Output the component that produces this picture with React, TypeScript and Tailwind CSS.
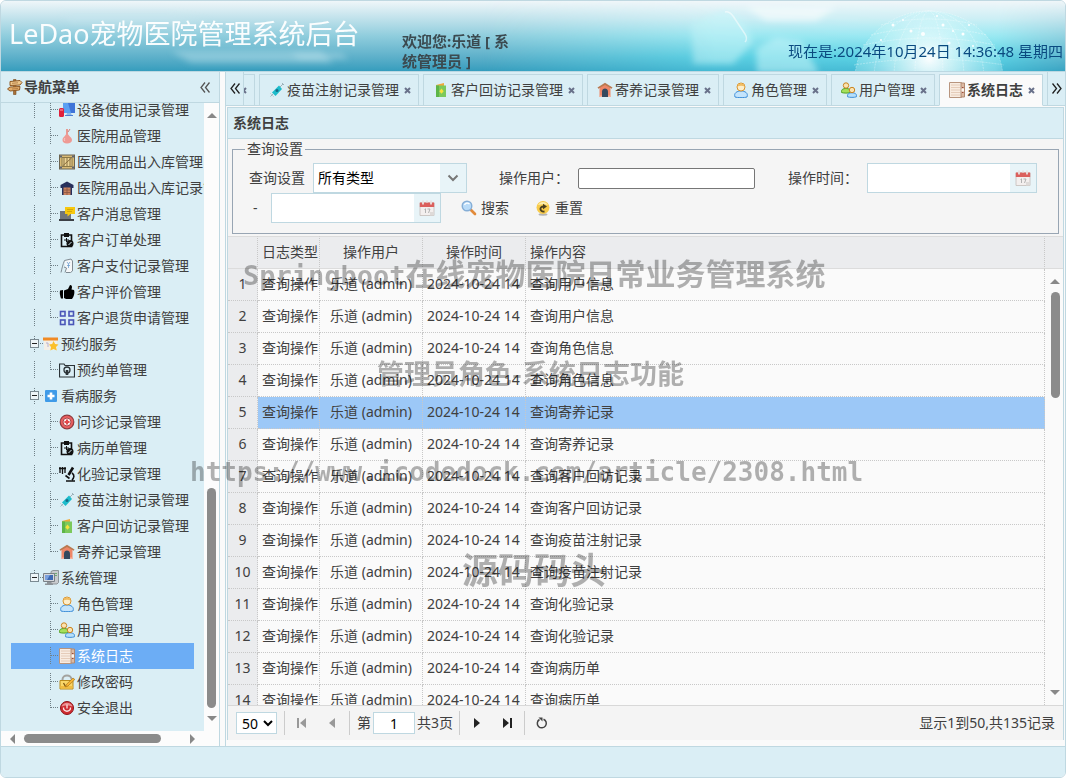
import { useState } from 'react';
import type { ReactNode } from 'react';
import clsx from 'clsx';

type IconName =
  | 'signpost' | 'monitor' | 'flask' | 'crate' | 'warehouse' | 'message' | 'clipboard' | 'payment'
  | 'thumb' | 'squares' | 'calendarStar' | 'folderKey' | 'plusBox' | 'diagnose' | 'microscope'
  | 'syringe' | 'booklet' | 'house' | 'computer' | 'user' | 'users' | 'log' | 'lock' | 'power'
  | 'calendar' | 'search' | 'reset';

const ICONS: Record<IconName, ReactNode> = {
  signpost: (
    <>
      <path d="M6.500 .5h2.500v15H6.500z" fill="#a8713a" stroke="#7b4a1c" strokeWidth=".6" />
      <path d="M3 2.500l10-1 2 2-2 2.500-10 .5z" fill="#f0c88c" stroke="#8f5a26" />
      <path d="M13 7.500l-10 .5-2.500 2 2.500 2 9.500-1z" fill="#e4ae6c" stroke="#8f5a26" />
      <path d="M5 4.300l6-.5M5 10l6-.5" stroke="#a8713a" strokeWidth=".8" />
    </>
  ),
  monitor: (
    <>
      <path d="M4 1h12v10H4z" fill="#5aa0f2" />
      <path d="M9 1h7v10h-4z" fill="#3f74d8" />
      <path d="M8 11h4l1 3H7z" fill="#8fb8e8" />
      <path d="M6 13h8v1H6z" fill="#4c7ed6" />
      <rect x="0" y="6" width="5" height="9" rx="1.500" fill="#e0203c" />
      <path d="M1 8h3" stroke="#f8a0ac" />
    </>
  ),
  flask: (
    <>
      <path d="M8 1v6" stroke="#e79a92" strokeWidth="2" />
      <path d="M8 4c1 4 5 5 5 8 0 2-2 3.500-5 3.500S3.500 14 3.500 12C3.500 9 7 8 8 4z" fill="#ee9a94" />
      <path d="M6 10c-1 1-1 2 0 3" stroke="#f9cfca" fill="none" />
      <path d="M11 1l-2 3" stroke="#cf7f78" />
    </>
  ),
  crate: (
    <>
      <rect x=".5" y="1" width="15" height="14" fill="#d9bb77" stroke="#6c6450" />
      <path d="M3 3.500h10v9H3z" fill="#ecd596" stroke="#8a7848" />
      <path d="M3.500 12L12.500 4M5 4v8M8 4v8M11 4v8" stroke="#8a7040" />
      <path d="M1 1.500h2v2H1zM13 1.500h2v2h-2zM1 12.500h2v2H1zM13 12.500h2v2h-2z" fill="#5f6472" />
    </>
  ),
  warehouse: (
    <>
      <path d="M1.500 5L8 1.500 14.500 5v3H13v7H3V8H1.500z" fill="#27305c" />
      <path d="M4.500 7.500h7V15h-7z" fill="#c98260" />
      <path d="M4.500 10h7M8 7.500V15M4.500 12.500h7" stroke="#8a5440" strokeWidth=".8" />
    </>
  ),
  message: (
    <>
      <path d="M1 5h11v8H1z" fill="#70757c" />
      <path d="M0 13h15v2H0z" fill="#3c4046" />
      <path d="M6 1h10v7h-4.500l-3 2.500V8H6z" fill="#f7c80e" />
      <path d="M8 3.500h6M8 5.500h5" stroke="#c9a008" strokeWidth=".8" />
    </>
  ),
  clipboard: (
    <>
      <path d="M2.500 3h10v11.500h-10z" fill="none" stroke="#111" strokeWidth="1.600" />
      <path d="M5 1h5v4H5z" fill="#111" />
      <path d="M7.500 6v4M5 8h5" stroke="#111" />
      <circle cx="11" cy="11.500" r="3.500" fill="#111" />
      <path d="M9.500 13l3-3" stroke="#daeef5" />
    </>
  ),
  payment: (
    <>
      <path d="M5.500 2.500l6.500-1.500 1.500 2v10l-2 1.500H7" fill="#f4f7f9" stroke="#7f8a92" />
      <path d="M5.500 2.500C4 6 3 10 2 14.500M5 9l2.500 1L6 14.500" stroke="#7f8a92" fill="none" />
      <path d="M8 4l1.500 2L11 4M9.500 6v4M8 7.500h3" stroke="#6f9fd0" fill="none" strokeWidth=".8" />
    </>
  ),
  thumb: (
    <>
      <path d="M1 6.500C.5 9 1 12 2 14.500h2V6z" fill="#000" />
      <path d="M5 6.500L9 5l2-4c2 0 2.500 1.500 1.500 4.500L15 6c1 2 0 7-2 9H7l-2-1z" fill="#000" />
    </>
  ),
  squares: (
    <g fill="none" stroke="#4a56b8" strokeWidth="1.600">
      <rect x="1.500" y="1.500" width="4.500" height="4.500" />
      <rect x="10" y="1.500" width="4.500" height="4.500" />
      <rect x="1.500" y="10" width="4.500" height="4.500" />
      <rect x="10" y="10" width="4.500" height="4.500" />
    </g>
  ),
  calendarStar: (
    <>
      <path d="M1 3h13v11H1z" fill="#f4efe6" />
      <path d="M0 1.500h15v3H0z" fill="#f08a24" />
      <path d="M3 7h2v4" stroke="#b8b2cf" fill="none" />
      <path d="M10.500 5l1.600 3 3.400.6-2.500 2.400.8 3.500-3.300-1.600-3.200 1.600.7-3.500L6 8.600 9.200 8z" fill="#fbc02a" />
    </>
  ),
  folderKey: (
    <>
      <path d="M.5 2v13h15V3.500H6L5 2z" fill="none" stroke="#2b3337" strokeWidth="1.200" />
      <circle cx="8" cy="8" r="3" fill="none" stroke="#2b3337" strokeWidth="1.300" />
      <path d="M8 8v5" stroke="#2b3337" strokeWidth="2.600" />
      <path d="M8 6v2" stroke="#daeef5" strokeWidth="1.600" />
    </>
  ),
  plusBox: (
    <>
      <rect x="2" y="2" width="12" height="12" rx="1" fill="#3f9be8" />
      <path d="M8 4.500v7M4.500 8h7" stroke="#fff" strokeWidth="2.600" />
    </>
  ),
  diagnose: (
    <>
      <circle cx="8" cy="8" r="6.800" fill="#ea5f60" stroke="#8f3a3e" strokeWidth="1.200" />
      <circle cx="8" cy="8" r="4" fill="#fbe9e8" stroke="#a8484c" />
      <path d="M8 5.500v5M5.500 8h5" stroke="#e2474b" strokeWidth="2" />
    </>
  ),
  microscope: (
    <>
      <path d="M1 1v6M3.500 1v7M6 1v6M0 2.500h7" stroke="#111" strokeWidth="1.300" />
      <path d="M14 1.500L9.500 9" stroke="#111" strokeWidth="2.600" />
      <path d="M13 7c3 2 2 5 0 7M6.500 9.500l4 3M7 15h9" stroke="#111" strokeWidth="1.600" fill="none" />
    </>
  ),
  syringe: (
    <>
      <path d="M13 1l2 2M14 2l-3 3M4 12l-2.500 2.500" stroke="#9db3bb" />
      <path d="M10 3.500L13 7l-6.500 7L3 10.500z" fill="#1cbccb" />
      <circle cx="8" cy="8.500" r="1.500" fill="#146c8a" />
      <path d="M1 11l4 4" stroke="#c3d3d8" />
    </>
  ),
  booklet: (
    <>
      <path d="M3 3l8-2v3H3z" fill="#f0a83a" />
      <path d="M3 3.500h10V15H3z" fill="#7cc95c" />
      <path d="M3 3.500h3V15H3z" fill="#5eb548" />
      <path d="M8.500 6.500l2.200 2.700-2.200 2.600-2.200-2.600z" fill="#f8e13c" />
    </>
  ),
  house: (
    <>
      <path d="M2.500 5.500L8 2l5.500 3.500V15h-11z" fill="#ee8768" />
      <path d="M8 .8L.5 5.500l.8 1.300L8 3l6.700 3.800.8-1.300z" fill="#b97a52" />
      <path d="M5 15V9.500c0-4 6-4 6 0V15z" fill="#34495e" />
      <path d="M2.500 13.500H5V15H2.500zM11 13.500h2.500V15H11z" fill="#f7b29c" />
    </>
  ),
  computer: (
    <>
      <path d="M8 1.500L10 .5h5.500v12L14 14H8z" fill="#c8cbce" stroke="#7d8489" strokeWidth=".8" />
      <path d="M11 3.500h3M11 5.500h3" stroke="#6fae72" />
      <path d="M.5 3.500h11v8H.5z" fill="#d5d8dc" stroke="#7a8086" />
      <path d="M2 5h8v5H2z" fill="#3e69b4" />
      <path d="M2 5h5l-3 5H2z" fill="#7ba0dd" />
      <path d="M4 12h4v1.500h2V15H2v-1.500h2z" fill="#8d9398" />
    </>
  ),
  user: (
    <>
      <path d="M2 15c-1.500-4 2-6 6-6s7.500 2 6 6c-2 .8-10 .8-12 0z" fill="#c3e4fc" stroke="#3f8fd8" />
      <circle cx="8" cy="5" r="4" fill="#fdeecb" stroke="#d8942f" />
      <path d="M4.300 4.500c1-4 6.500-4 7.400 0-2-1-5.400-1-7.400 0z" fill="#f1bd62" />
    </>
  ),
  users: (
    <>
      <path d="M.6 10.500C0 7.500 2 6.500 5 6.500s5 1 4.400 4c-2 .8-7 .8-8.800 0z" fill="#a6e05c" stroke="#4f9f22" />
      <circle cx="5" cy="3.500" r="2.700" fill="#fbe3b0" stroke="#c98422" />
      <path d="M6.600 14.800c-.6-3 1.400-4 4.400-4s5 1 4.400 4c-2 .8-7 .8-8.800 0z" fill="#b5dffb" stroke="#3f8fd8" />
      <circle cx="11" cy="8" r="2.700" fill="#fbe3b0" stroke="#c98422" />
    </>
  ),
  log: (
    <>
      <path d="M.5 .5h12v15H.5z" fill="#f8ece1" stroke="#b8957e" />
      <path d="M2 3h9M2 5.500h9M2 8h9M2 10.500h9M2 13h9" stroke="#e2c8b4" strokeWidth=".9" />
      <path d="M12 1h3.500v14H12z" fill="#dcb9a2" stroke="#b08a72" />
      <path d="M12.500 6.500h2.500v3h-2.500z" fill="#fbf3ec" />
      <path d="M13 5.500h1.500M13 10.500h1.500" stroke="#9b4a3a" />
    </>
  ),
  lock: (
    <>
      <path d="M3.500 7V5.500c0-5.500 9-5.500 9 0" fill="none" stroke="#a3a39f" strokeWidth="2" />
      <path d="M1 6.500h13v8.500H1z" fill="#f9d668" stroke="#b98a1c" />
      <path d="M1.500 12h12v2.500h-12z" fill="#f2bd40" />
      <path d="M4.500 9l2 3.500" stroke="#7a5410" strokeWidth="1.300" />
      <path d="M6.500 13l.8-2.500L14 4l1.800 1.500-6.800 6.500z" fill="#f9b532" stroke="#a8741a" strokeWidth=".7" />
    </>
  ),
  power: (
    <>
      <circle cx="8" cy="8" r="6.500" fill="#cf2c31" stroke="#8e1418" />
      <path d="M2.500 6.500c1.500-5 9.500-5 11 0-3-1.500-8-1.500-11 0z" fill="#f4b0b0" opacity=".75" />
      <path d="M4.500 7.500c-.5 5 7.500 5 7 0M8 4.500v4" fill="none" stroke="#fbe3e3" strokeWidth="1.300" />
    </>
  ),
  calendar: (
    <>
      <path d="M1 3h14v12.500H1z" fill="#f3efee" stroke="#c4bcb9" strokeWidth=".8" />
      <path d="M.8 2.500h14.400V7H.8z" fill="#db5f5c" />
      <path d="M4 .5v4M12 .5v4M8 .5v2" stroke="#e9e1e0" strokeWidth="1.800" />
      <path d="M5.500 9.500l1-.7V13M8.500 9h2.500L9.500 13" stroke="#aaa" fill="none" strokeWidth=".9" />
      <path d="M11 12h4v3.500h-4z" fill="#dedad8" />
    </>
  ),
  search: (
    <>
      <path d="M10 10l4 4" stroke="#e28a3a" strokeWidth="2.600" strokeLinecap="round" />
      <circle cx="6" cy="6" r="4.800" fill="#b9dbf8" stroke="#86aed6" strokeWidth="1.400" />
      <path d="M3.500 5c1-2 3-2.500 5-1" stroke="#fff" fill="none" strokeWidth="1.300" />
    </>
  ),
  reset: (
    <>
      <ellipse cx="8" cy="14.500" rx="4.500" ry="1.200" fill="#b4b4b4" />
      <circle cx="8" cy="7.500" r="6.500" fill="#f8cb4a" />
      <path d="M3 5c2-4 8-4 10 0-3-1-7-1-10 0z" fill="#fdeeb0" />
      <path d="M9.500 11.500c-5 .5-5.500-5-1-5" fill="none" stroke="#4a3f20" strokeWidth="1.800" />
      <path d="M8 3.800l4 2.700-4 2.700z" fill="#4a3f20" />
    </>
  ),
};

function Icon({ name }: { name: IconName }) {
  return (
    <svg width="16" height="16" viewBox="0 0 16 16" className="shrink-0" aria-hidden="true">
      {ICONS[name]}
    </svg>
  );
}

interface TreeGroup {
  label: string;
  icon: IconName;
  items: { label: string; icon: IconName }[];
}

const TREE: TreeGroup[] = [
  {
    label: '',
    icon: 'plusBox',
    items: [
      { label: '设备使用记录管理', icon: 'monitor' },
      { label: '医院用品管理', icon: 'flask' },
      { label: '医院用品出入库管理', icon: 'crate' },
      { label: '医院用品出入库记录管理', icon: 'warehouse' },
      { label: '客户消息管理', icon: 'message' },
      { label: '客户订单处理', icon: 'clipboard' },
      { label: '客户支付记录管理', icon: 'payment' },
      { label: '客户评价管理', icon: 'thumb' },
      { label: '客户退货申请管理', icon: 'squares' },
    ],
  },
  { label: '预约服务', icon: 'calendarStar', items: [{ label: '预约单管理', icon: 'folderKey' }] },
  {
    label: '看病服务',
    icon: 'plusBox',
    items: [
      { label: '问诊记录管理', icon: 'diagnose' },
      { label: '病历单管理', icon: 'clipboard' },
      { label: '化验记录管理', icon: 'microscope' },
      { label: '疫苗注射记录管理', icon: 'syringe' },
      { label: '客户回访记录管理', icon: 'booklet' },
      { label: '寄养记录管理', icon: 'house' },
    ],
  },
  {
    label: '系统管理',
    icon: 'computer',
    items: [
      { label: '角色管理', icon: 'user' },
      { label: '用户管理', icon: 'users' },
      { label: '系统日志', icon: 'log' },
      { label: '修改密码', icon: 'lock' },
      { label: '安全退出', icon: 'power' },
    ],
  },
];

const TABS: { label: string; icon: IconName }[] = [
  { label: '病历单管理', icon: 'clipboard' },
  { label: '疫苗注射记录管理', icon: 'syringe' },
  { label: '客户回访记录管理', icon: 'booklet' },
  { label: '寄养记录管理', icon: 'house' },
  { label: '角色管理', icon: 'user' },
  { label: '用户管理', icon: 'users' },
  { label: '系统日志', icon: 'log' },
];

const LOGS = [
  '查询用户信息', '查询用户信息', '查询角色信息', '查询角色信息', '查询寄养记录',
  '查询寄养记录', '查询客户回访记录', '查询客户回访记录', '查询疫苗注射记录', '查询疫苗注射记录',
  '查询化验记录', '查询化验记录', '查询病历单', '查询病历单',
];

// Dotted connector lines of the tree, one 16px cell per depth level
function TreeLine({ kind }: { kind: 'line' | 'join' | 'last' | 'none' | 'open' | 'openLast' }) {
  if (kind === 'none') return <span className="w-4 shrink-0" />;
  const open = kind === 'open' || kind === 'openLast';
  return (
    <svg width="16" height="18" viewBox="0 0 16 18" className="shrink-0" aria-hidden="true">
      <g stroke="#6f7f86" strokeDasharray="1 1" fill="none">
        {!open && <path d={kind === 'last' ? 'M7.500 0v9' : 'M7.500 0v18'} />}
        {(kind === 'join' || kind === 'last') && <path d="M8 8.500h8" />}
        {open && <path d={kind === 'open' ? 'M7.500 1v3M7.500 14v4M13 8.500h3' : 'M7.500 1v3M13 8.500h3'} />}
      </g>
      {open && (
        <>
          <rect x="3.500" y="4.500" width="8" height="8" fill="#eef5f8" stroke="#7b8a92" />
          <path d="M5 8.500h5" stroke="#222" />
        </>
      )}
    </svg>
  );
}

function Arrow({ dir }: { dir: 'up' | 'down' | 'left' | 'right' }) {
  const paths = { up: 'M0 7l5-5 5 5z', down: 'M0 3l5 5 5-5z', left: 'M8 0L3 5l5 5z', right: 'M2 0l5 5-5 5z' };
  return (
    <svg width="10" height="10" viewBox="0 0 10 10" className="shrink-0" aria-hidden="true">
      <path d={paths[dir]} fill="#888" />
    </svg>
  );
}

function Chevrons({ dir, color }: { dir: 'left' | 'right'; color: string }) {
  return (
    <svg width="10" height="11" viewBox="0 0 10 11" aria-hidden="true">
      <path
        d={dir === 'left' ? 'M5 .5l-4 5 4 5M9.500 .5l-4 5 4 5' : 'M.5 .5l4 5-4 5M5 .5l4 5-4 5'}
        fill="none"
        stroke={color}
        strokeWidth="1.300"
      />
    </svg>
  );
}

function Banner() {
  return (
    <header className="relative flex h-[71px] shrink-0 items-end border-b border-[#bcd8e2] bg-linear-to-b from-[#eff6f9] via-[#8fcddd] to-[#359dbd]">
      <svg className="absolute inset-0 size-full" viewBox="0 0 1064 70" preserveAspectRatio="xMaxYMid slice" aria-hidden="true">
        <defs>
          <linearGradient id="aqua" x1="0" y1="0" x2="0" y2="1">
            <stop offset="0" stopColor="#f0f6f9" />
            <stop offset=".25" stopColor="#cdeff5" />
            <stop offset=".5" stopColor="#9ae9f2" />
            <stop offset=".8" stopColor="#5cd3e5" />
            <stop offset="1" stopColor="#48bdd6" />
          </linearGradient>
          <linearGradient id="fade" x1="0" y1="0" x2="1" y2="0">
            <stop offset="0" stopColor="#fff" stopOpacity="0" />
            <stop offset=".4" stopColor="#fff" stopOpacity=".9" />
            <stop offset=".88" stopColor="#fff" />
            <stop offset="1" stopColor="#fff" stopOpacity=".2" />
          </linearGradient>
          <mask id="right"><rect x="480" width="584" height="70" fill="url(#fade)" /></mask>
          <radialGradient id="globe" cx=".5" cy=".35" r=".6">
            <stop offset="0" stopColor="#fff" />
            <stop offset=".35" stopColor="#dcf9fb" stopOpacity=".75" />
            <stop offset=".7" stopColor="#b5f0f6" stopOpacity=".5" />
            <stop offset="1" stopColor="#a5ebf3" stopOpacity=".3" />
          </radialGradient>
          <filter id="soft" x="-20%" y="-50%" width="140%" height="200%"><feGaussianBlur stdDeviation="3" /></filter>
        </defs>
        <g fill="#c8e8f0" filter="url(#soft)">
          <path d="M60 12h110l40 10H70z" opacity=".35" />
          <path d="M170 50h150l12 12H190z" opacity=".4" />
          <path d="M290 52h50l8 6h-50z" opacity=".4" />
        </g>
        <g mask="url(#right)">
          <rect x="480" width="584" height="70" fill="url(#aqua)" />
          <g filter="url(#soft)">
            <path d="M690 22l34-13 20 12 8 20-20 22h-40z" fill="#c6f6fa" opacity=".6" />
            <path d="M755 48l20-12 25 4 18 32h-62z" fill="#c9f8fb" opacity=".6" />
            <path d="M745 6h90l-20 14h-50z" fill="#fff" opacity=".6" />
          </g>
          <path d="M724 11q4-1 8 4l12 18q3 5 0 8" fill="none" stroke="#fff" strokeWidth="1.500" opacity=".6" />
          <ellipse cx="928" cy="78" rx="74" ry="68" fill="url(#globe)" />
          <g fill="none" stroke="#fff" strokeWidth=".7" strokeDasharray="2 1" opacity=".5">
            <ellipse cx="928" cy="78" rx="74" ry="68" />
            <ellipse cx="928" cy="78" rx="55" ry="68" />
            <ellipse cx="928" cy="78" rx="35" ry="68" />
            <ellipse cx="928" cy="78" rx="14" ry="68" />
            <path d="M880 24q48-12 96 0M870 34q58-14 116 0M862 44q66-14 132 0M857 54q70-14 142 0M853 64q75-12 150 0" />
          </g>
          <g fill="#fff">
            <circle cx="892" cy="24" r="1.500" /><circle cx="910" cy="30" r="1.500" /><circle cx="922" cy="33" r="2" />
            <circle cx="942" cy="24" r="1.500" /><circle cx="962" cy="33" r="1.500" /><circle cx="880" cy="39" r="1" />
            <circle cx="948" cy="42" r="1.500" /><circle cx="972" cy="45" r="1" /><circle cx="936" cy="15" r="1" />
            <circle cx="902" cy="19" r="1" /><circle cx="952" cy="30" r="1" /><circle cx="968" cy="24" r="1" />
          </g>
        </g>
      </svg>
      <h1 className="relative w-[401px] shrink-0 pb-[19px] pl-2 text-[27px] leading-9 whitespace-nowrap text-white/95">
        LeDao宠物医院管理系统后台
      </h1>
      <div className="relative w-28 shrink-0 text-[15px] leading-5 font-bold text-[#3b4a50]">
        欢迎您:乐道 [ 系统管理员 ]
      </div>
      <div className="relative ml-auto pr-[2px] pb-[10px] text-[15px] leading-5 text-[#0a4a80]">
        现在是:2024年10月24日 14:36:48 星期四
      </div>
    </header>
  );
}

function Sidebar({ active, onSelect }: { active: string; onSelect: (label: string) => void }) {
  return (
    <aside className="flex w-[219px] shrink-0 flex-col border-r border-[#bfd8e1] bg-[#daeef5]">
      <div className="flex h-[31px] shrink-0 items-center border-b border-[#bfd8e1] px-[6px]">
        <Icon name="signpost" />
        <h2 className="ml-px flex-1 text-sm font-bold">导航菜单</h2>
        <button className="px-[3px]" aria-label="收起"><Chevrons dir="left" color="#555" /></button>
      </div>
      <div className="flex min-h-0 flex-1">
        <nav className="flex min-w-0 flex-1 flex-col justify-end overflow-hidden px-[10px] pb-[10px]">
          {TREE.map((group, g) => {
            const lastGroup = g === TREE.length - 1;
            return (
              <div key={g}>
                {group.label && (
                  <div className="flex h-[26px] items-center">
                    <TreeLine kind="none" />
                    <TreeLine kind={lastGroup ? 'openLast' : 'open'} />
                    <Icon name={group.icon} />
                    <span className="ml-[2px] whitespace-nowrap">{group.label}</span>
                  </div>
                )}
                {group.items.map((item, i) => (
                  <button
                    key={item.label}
                    onClick={() => onSelect(item.label)}
                    className={clsx('flex h-[26px] w-full items-center', active === item.label && 'bg-[#6cadf5] text-white')}
                  >
                    <TreeLine kind="none" />
                    <TreeLine kind={lastGroup ? 'none' : 'line'} />
                    <TreeLine kind={i === group.items.length - 1 ? 'last' : 'join'} />
                    <Icon name={item.icon} />
                    <span className="ml-[2px] whitespace-nowrap">{item.label}</span>
                  </button>
                ))}
              </div>
            );
          })}
        </nav>
        <div className="flex w-[15px] flex-col items-center bg-[#fcfcfc] pt-2 pb-2">
          <Arrow dir="up" />
          <div className="flex-1" />
          <div className="h-[220px] w-[9px] rounded-full bg-[#8b8b8b]" />
          <div className="h-[5px]" />
          <Arrow dir="down" />
        </div>
      </div>
      <div className="flex h-[15px] shrink-0 items-center bg-[#fcfcfc] pr-[21px] pl-[6px]">
        <Arrow dir="left" />
        <div className="ml-[7px] h-[9px] w-[137px] rounded-full bg-[#8b8b8b]" />
        <div className="flex-1" />
        <Arrow dir="right" />
      </div>
    </aside>
  );
}

function TabStrip() {
  return (
    <div className="flex h-[34px] shrink-0 bg-[#daeef5] shadow-[inset_0_-1px_0_#bfd8e1]">
      <button className="flex w-[18px] shrink-0 items-center justify-center border-r border-b border-[#bfd8e1]" aria-label="向左">
        <Chevrons dir="left" color="#222" />
      </button>
      <div className="flex min-w-0 flex-1 justify-end gap-1 overflow-hidden pt-[2px] pr-1">
        {TABS.map(tab => {
          const active = tab.label === '系统日志';
          return (
            <div
              key={tab.label}
              className={clsx(
                'flex shrink-0 items-center border border-[#bfd8e1] pr-[6px] pl-[9px]',
                active && 'border-b-[#fafafa] bg-[#fafafa] font-bold'
              )}
            >
              <Icon name={tab.icon} />
              <span className="ml-[2px] whitespace-nowrap">{tab.label}</span>
              <button className="ml-1 flex w-[9px] justify-center" aria-label={`关闭${tab.label}`}>
                <svg width="7" height="7" viewBox="0 0 7 7" aria-hidden="true">
                  <path d="M1 1l5 5M6 1L1 6" stroke="#69718a" strokeWidth="2" />
                </svg>
              </button>
            </div>
          );
        })}
      </div>
      <button className="flex w-[18px] shrink-0 items-center justify-center border-b border-l border-[#bfd8e1]" aria-label="向右">
        <Chevrons dir="right" color="#222" />
      </button>
    </div>
  );
}

function DateBox({ id, label }: { id: string; label: string }) {
  return (
    <div className="flex h-[30px] w-[170px] border border-[#bfd8e1] bg-white">
      <input id={id} aria-label={label} className="w-full min-w-0 flex-1 px-1 outline-none" />
      <button type="button" className="flex w-[26px] items-center justify-center bg-[#e8f4f8]" aria-label="选择日期">
        <Icon name="calendar" />
      </button>
    </div>
  );
}

function Filters() {
  return (
    <form className="px-1 pb-[2px]" onSubmit={e => e.preventDefault()}>
      <fieldset className="border border-[#98a5b3] px-3 pt-1 pb-[10px]">
        <legend className="px-[2px] leading-5">查询设置</legend>
        <div className="flex flex-wrap items-center pl-1">
          <label htmlFor="log-type" className="mr-2">查询设置</label>
          <div className="relative h-[30px] w-[154px] border border-[#bfd8e1] bg-white">
            <select id="log-type" className="size-full appearance-none px-1 text-black outline-none">
              <option>所有类型</option>
            </select>
            <span className="pointer-events-none absolute inset-y-0 right-0 flex w-[26px] items-center justify-center bg-[#e8f4f8]">
              <svg width="12" height="8" viewBox="0 0 12 8" aria-hidden="true">
                <path d="M1.500 1.500L6 6l4.500-4.500" fill="none" stroke="#777" strokeWidth="2" />
              </svg>
            </span>
          </div>
          <label htmlFor="log-user" className="ml-8 w-[79px]">操作用户：</label>
          <input id="log-user" className="h-[21px] w-[177px] rounded-[2px] border border-[#767676] bg-white px-1" />
          <label htmlFor="log-from" className="ml-[33px] w-[79px]">操作时间：</label>
          <DateBox id="log-from" label="开始时间" />
          <div className="flex items-center">
            <label htmlFor="log-to" className="w-[22px] pl-1">-</label>
            <DateBox id="log-to" label="结束时间" />
          </div>
          <button type="button" className="ml-5 flex items-center gap-1"><Icon name="search" />搜索</button>
          <button type="button" className="ml-[26px] flex items-center gap-1"><Icon name="reset" />重置</button>
        </div>
      </fieldset>
    </form>
  );
}

function LogTable() {
  const [selected, setSelected] = useState(4);
  const th = 'h-[33px] border-y border-r border-y-[#dcdcdc] border-r-[#c8c8c8] [border-right-style:dotted] px-1 pb-[2px] font-normal';
  const td = 'h-8 overflow-hidden border-r border-b border-dotted border-[#c8c8c8] px-1 pb-[2px] whitespace-nowrap';
  return (
    <div className="flex min-h-0 flex-1 overflow-hidden bg-[#fafafa]">
      <div className="min-w-0 flex-1 overflow-hidden">
        <table className="w-full table-fixed border-separate border-spacing-0 text-center">
          <colgroup>
            <col className="w-[30px]" />
            <col className="w-[62px]" />
            <col className="w-[103px]" />
            <col className="w-[103px]" />
            <col />
          </colgroup>
          <thead className="bg-[#ebecee]">
            <tr>
              <th className={th} aria-label="序号" />
              <th className={clsx(th, 'whitespace-nowrap')}>日志类型</th>
              <th className={th}>操作用户</th>
              <th className={th}>操作时间</th>
              <th className={clsx(th, 'text-left')}>操作内容</th>
            </tr>
          </thead>
          <tbody>
            {LOGS.map((content, i) => (
              <tr key={i} onClick={() => setSelected(i)} className={clsx(selected === i && 'bg-[#9cc8f7]')}>
                <td className={clsx(td, 'bg-[#ebecee]')}>{i + 1}</td>
                <td className={td}>查询操作</td>
                <td className={td}>乐道 (admin)</td>
                <td className={clsx(td, 'text-left')}>2024-10-24 14</td>
                <td className={clsx(td, 'text-left')}>{content}</td>
              </tr>
            ))}
          </tbody>
        </table>
      </div>
      <div className="flex w-[18px] shrink-0 flex-col">
        <div className="h-[33px] border-y border-[#dcdcdc] bg-[#ebecee]" />
        <div className="flex flex-1 flex-col items-center py-2 pl-[2px]">
          <Arrow dir="up" />
          <div className="mt-[5px] h-[106px] w-[9px] rounded-full bg-[#8b8b8b]" />
          <div className="flex-1" />
          <Arrow dir="down" />
        </div>
      </div>
    </div>
  );
}

function PageButton({ label, d, disabled }: { label: string; d: string; disabled?: boolean }) {
  return (
    <button disabled={disabled} aria-label={label} className="flex w-[30px] items-center justify-center">
      <svg width="10" height="10" viewBox="0 0 10 10" aria-hidden="true">
        <path d={d} fill={disabled ? '#999' : '#222'} />
      </svg>
    </button>
  );
}

function Separator() {
  return <span className="mx-[2px] h-6 w-px bg-[#ccc]" />;
}

function Pager() {
  return (
    <div className="flex h-[35px] shrink-0 items-center border-t border-[#d8d8d8] bg-[#f4f4f4] px-2">
      <select aria-label="每页条数" className="mr-[5px] h-[22px] w-[41px] border border-[#bfd8e1] bg-white pl-px text-black">
        <option>50</option>
      </select>
      <Separator />
      <PageButton label="首页" disabled d="M0 0h2v10H0zM9 0v10L3 5z" />
      <PageButton label="上一页" disabled d="M8 0v10L2 5z" />
      <Separator />
      <label htmlFor="page-no" className="ml-[5px]">第</label>
      <input id="page-no" defaultValue="1" className="mx-[2px] h-[22px] w-[42px] border border-[#bfd8e1] bg-white text-center text-black" />
      <span className="mr-1">共3页</span>
      <Separator />
      <PageButton label="下一页" d="M2 0v10l6-5z" />
      <PageButton label="末页" d="M1 0v10l6-5zM8 0h2v10H8z" />
      <Separator />
      <button aria-label="刷新" className="flex w-[30px] items-center justify-center">
        <svg width="12" height="12" viewBox="0 0 12 12" aria-hidden="true">
          <path d="M3.500 2.500a4.500 4.500 0 1 0 4 -.3" fill="none" stroke="#444" strokeWidth="1.500" />
          <path d="M2.500 .5h4v4z" fill="#444" />
        </svg>
      </button>
      <span className="ml-auto">显示1到50,共135记录</span>
    </div>
  );
}

function Watermark() {
  const line = 'absolute font-["DejaVu_Sans_Mono","Noto_Sans_CJK_SC",monospace] font-bold whitespace-nowrap text-black/30';
  const cjk = 'font-["Noto_Sans_CJK_SC",sans-serif]';
  return (
    <div className="pointer-events-none absolute inset-0 overflow-hidden">
      <p className={clsx(line, 'top-[251px] left-[242px] text-[27px] leading-10')}>
        Springboot<span className={clsx(cjk, 'text-[30px]')}>在线宠物医院日常业务管理系统</span>
      </p>
      <p className={clsx(line, cjk, 'top-[352px] left-[376px] text-[27px] leading-10')}>管理员角色-系统日志功能</p>
      <p className={clsx(line, 'top-[451px] left-[189px] text-[26px] leading-10')}>https://www.icodedock.com/article/2308.html</p>
      <p className={clsx(line, cjk, 'top-[547px] left-[461px] text-[36px] leading-10')}>源码码头</p>
    </div>
  );
}

export default function App() {
  const [active, setActive] = useState('系统日志');

  return (
    <div className='relative flex h-screen flex-col overflow-hidden rounded-md border border-[#bfd8e1] bg-[#fafafa] font-["Noto_Sans","Noto_Sans_CJK_SC",sans-serif] text-sm leading-5 text-[#404040]'>
      <Banner />
      <div className="flex min-h-0 flex-1">
        <Sidebar active={active} onSelect={setActive} />
        <main className="ml-[5px] flex min-w-0 flex-1 flex-col border-l border-[#bfd8e1]">
          <TabStrip />
          <section className="mx-px mt-px mb-[6px] flex min-h-0 flex-1 flex-col border-x border-t border-[#bfd8e1] bg-[#f5f5f5]">
            <h3 className="flex h-[31px] shrink-0 items-center border-b border-[#bfd8e1] bg-[#daeef5] px-[5px] font-bold">系统日志</h3>
            <Filters />
            <LogTable />
            <Pager />
          </section>
        </main>
      </div>
      <footer className="h-[31px] shrink-0 border-t border-[#bfd8e1] bg-[#daeef5]" />
      <Watermark />
    </div>
  );
}
